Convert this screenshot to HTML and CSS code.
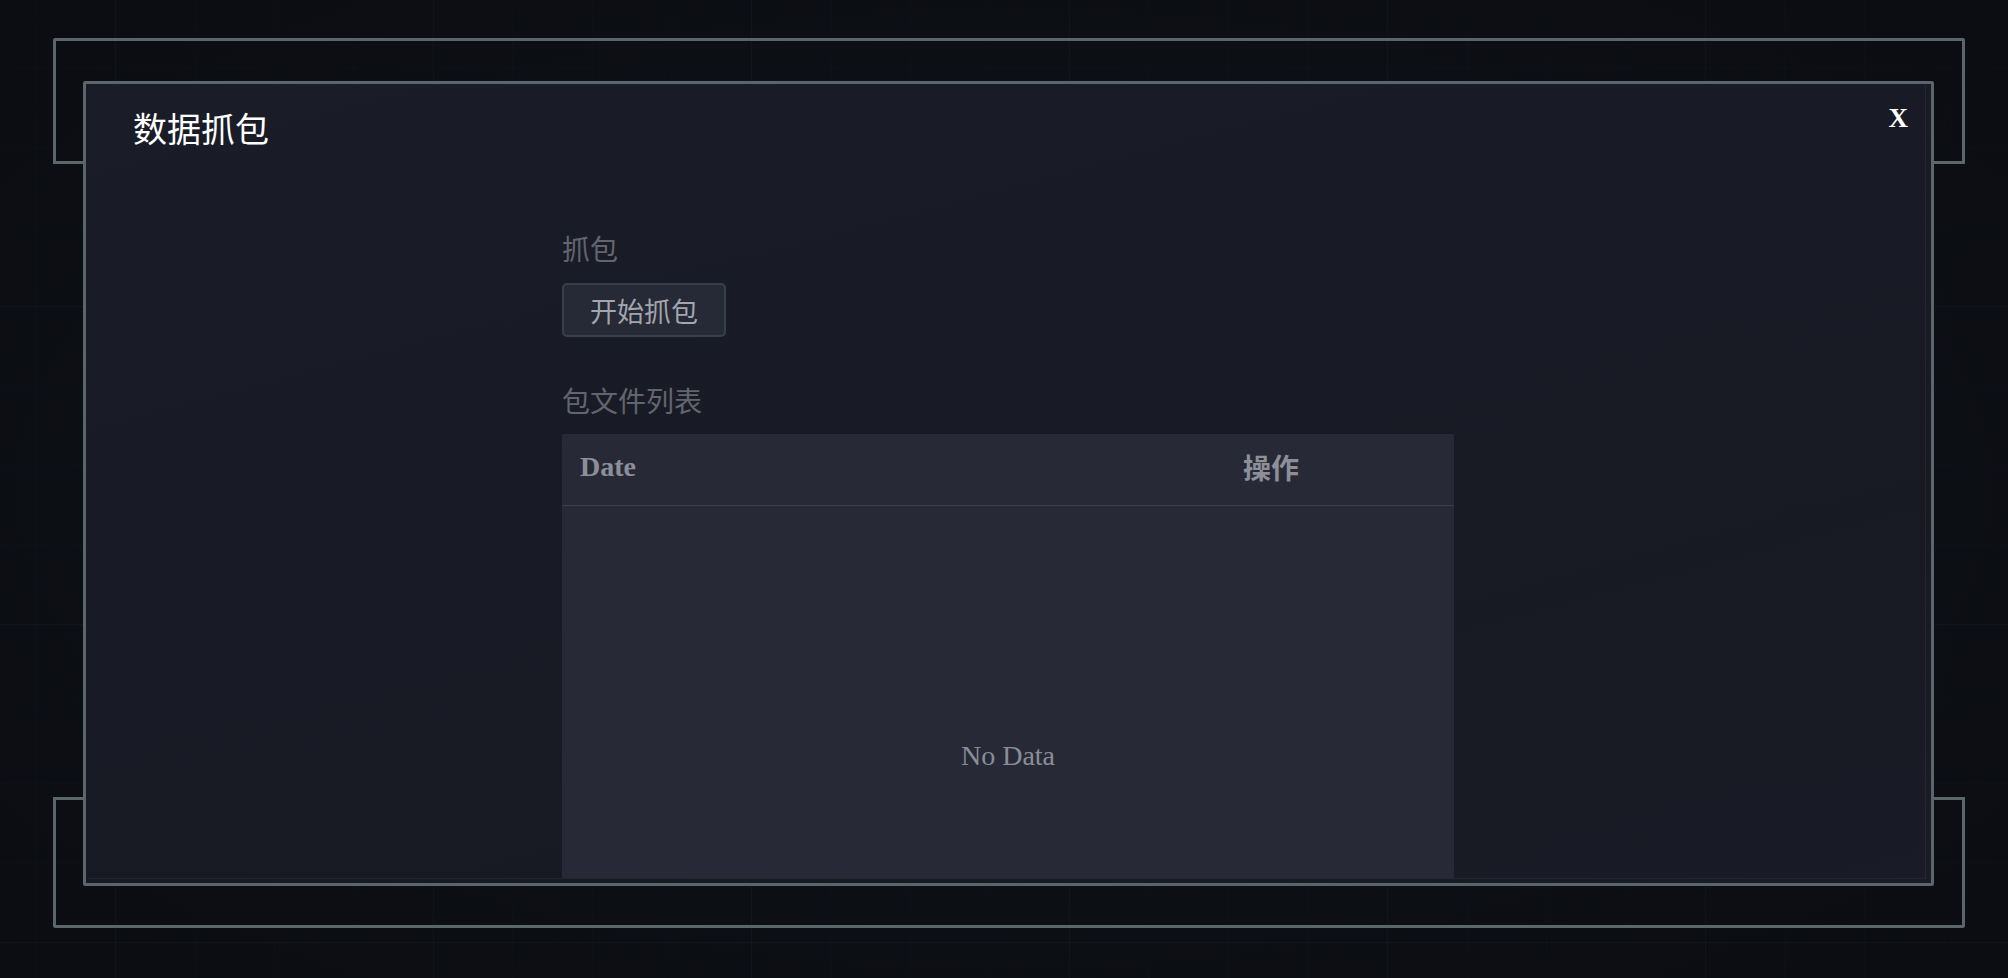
FILE: index.html
```html
<!DOCTYPE html>
<html lang="zh-CN">
<head>
<meta charset="utf-8">
<title>数据抓包</title>
<link rel="stylesheet" href="styles.css">
</head>
<body>
<div class="stage">
  <div class="bracket bracket-top"></div>
  <div class="bracket bracket-bottom"></div>
  <div class="modal">
    <div class="modal-body">
      <div class="modal-header">
        <div class="modal-title">数据抓包</div>
        <div class="modal-close">X</div>
      </div>
      <div class="content">
        <div class="label">抓包</div>
        <div class="btn-row"><button class="btn">开始抓包</button></div>
        <div class="label label-list">包文件列表</div>
        <table class="table">
          <colgroup><col class="col-date"><col class="col-op"></colgroup>
          <thead>
            <tr><th>Date</th><th class="th-op">操作</th></tr>
          </thead>
          <tbody>
            <tr><td class="empty" colspan="2">No Data</td></tr>
          </tbody>
        </table>
      </div>
    </div>
  </div>
</div>
</body>
</html>
```

FILE: styles.css
```css
html, body {
  margin: 0;
  padding: 0;
}
body {
  width: 2008px;
  height: 978px;
  overflow: hidden;
  background-color: #0c0e13;
  background-image:
    radial-gradient(ellipse at 50% 50%, rgba(20, 24, 32, 0.5) 0%, rgba(8, 10, 14, 0.3) 100%),
    linear-gradient(rgba(90, 120, 130, 0.07) 1px, transparent 1px),
    linear-gradient(90deg, rgba(90, 120, 130, 0.07) 1px, transparent 1px),
    linear-gradient(rgba(90, 120, 130, 0.03) 1px, transparent 1px),
    linear-gradient(90deg, rgba(90, 120, 130, 0.03) 1px, transparent 1px);
  background-size: 100% 100%, 318px 318px, 318px 318px, 79.5px 79.5px, 79.5px 79.5px;
  background-position: 0 0, 115px 306px, 115px 306px, 115px 306px, 115px 306px;
  font-family: "Liberation Serif", "Noto Sans CJK SC", serif;
}
.stage {
  position: relative;
  width: 2008px;
  height: 978px;
}

/* decorative corner brackets behind the dialog */
.bracket {
  position: absolute;
  left: 53px;
  width: 1912px;
  box-sizing: border-box;
  border: 3px solid #5a666b;
}
.bracket::before {
  content: "";
  position: absolute;
  left: -3px;
  right: -3px;
  height: 3px;
  background: linear-gradient(90deg, #5a666b 0 33px, transparent 33px calc(100% - 33px), #5a666b calc(100% - 33px));
}
.bracket-top {
  top: 38px;
  height: 126px;
  border-bottom: 0;
  border-radius: 3px 3px 0 0;
}
.bracket-top::before {
  bottom: 0;
}
.bracket-bottom {
  top: 797px;
  height: 131px;
  border-top: 0;
  border-radius: 0 0 3px 3px;
}
.bracket-bottom::before {
  top: 0;
}

/* dialog */
.modal {
  position: absolute;
  left: 83px;
  top: 81px;
  width: 1851px;
  height: 805px;
  box-sizing: border-box;
  border: 3px solid #5a666b;
  border-radius: 2px;
  background: linear-gradient(165deg, #1a1d28 0%, #181b25 45%, #171a23 70%, #191c26 100%);
  display: flex;
}
.modal-body {
  flex: 1;
  margin: 0 6px 5px 0;
  padding-left: 5px;
  overflow: hidden;
  box-shadow: 1px 1px 0 rgba(255, 255, 255, 0.05);
  display: flex;
  flex-direction: column;
}
.modal-header {
  display: flex;
  justify-content: space-between;
  align-items: flex-start;
  padding: 19px 17px 0 42px;
}
.modal-title {
  margin-top: 8px;
  font-family: "Noto Sans CJK SC", sans-serif;
  font-size: 34px;
  line-height: 34px;
  color: #ffffff;
}
.modal-close {
  margin-top: 2px;
  font-family: "Liberation Serif", serif;
  font-weight: bold;
  font-size: 27px;
  line-height: 27px;
  color: #ffffff;
}
.content {
  width: 892px;
  margin: 89px auto 0;
  flex-shrink: 0;
}
.label {
  font-family: "Noto Sans CJK SC", sans-serif;
  font-size: 28px;
  line-height: 28px;
  color: #62656e;
}
.btn-row {
  margin-top: 21px;
  display: flex;
}
.btn {
  width: 164px;
  height: 54px;
  box-sizing: border-box;
  border: 2px solid #393e4b;
  border-radius: 5px;
  background: #262a36;
  color: #a3a6ae;
  font-family: "Noto Sans CJK SC", sans-serif;
  font-size: 27px;
  line-height: 27px;
  padding: 0;
  display: flex;
  align-items: center;
  justify-content: center;
}
.label-list {
  margin-top: 49px;
}
.table {
  margin-top: 20px;
  width: 892px;
  border-collapse: collapse;
  table-layout: fixed;
  background: #272a36;
}
.col-date {
  width: 663px;
}
.col-op {
  width: 229px;
}
.table th {
  height: 71px;
  box-sizing: border-box;
  padding: 0 18px 4px;
  text-align: left;
  font-family: "Liberation Serif", "Noto Sans CJK SC", serif;
  font-weight: bold;
  font-size: 28px;
  color: #8d8f98;
  border-bottom: 1px solid #3a3e4a;
  vertical-align: middle;
}
.table .th-op {
  font-family: "Noto Sans CJK SC", sans-serif;
  line-height: 28px;
}
.table .empty {
  height: 500px;
  padding: 0;
  text-align: center;
  vertical-align: middle;
  font-family: "Liberation Serif", serif;
  font-size: 28px;
  color: #8a8d96;
}
```
